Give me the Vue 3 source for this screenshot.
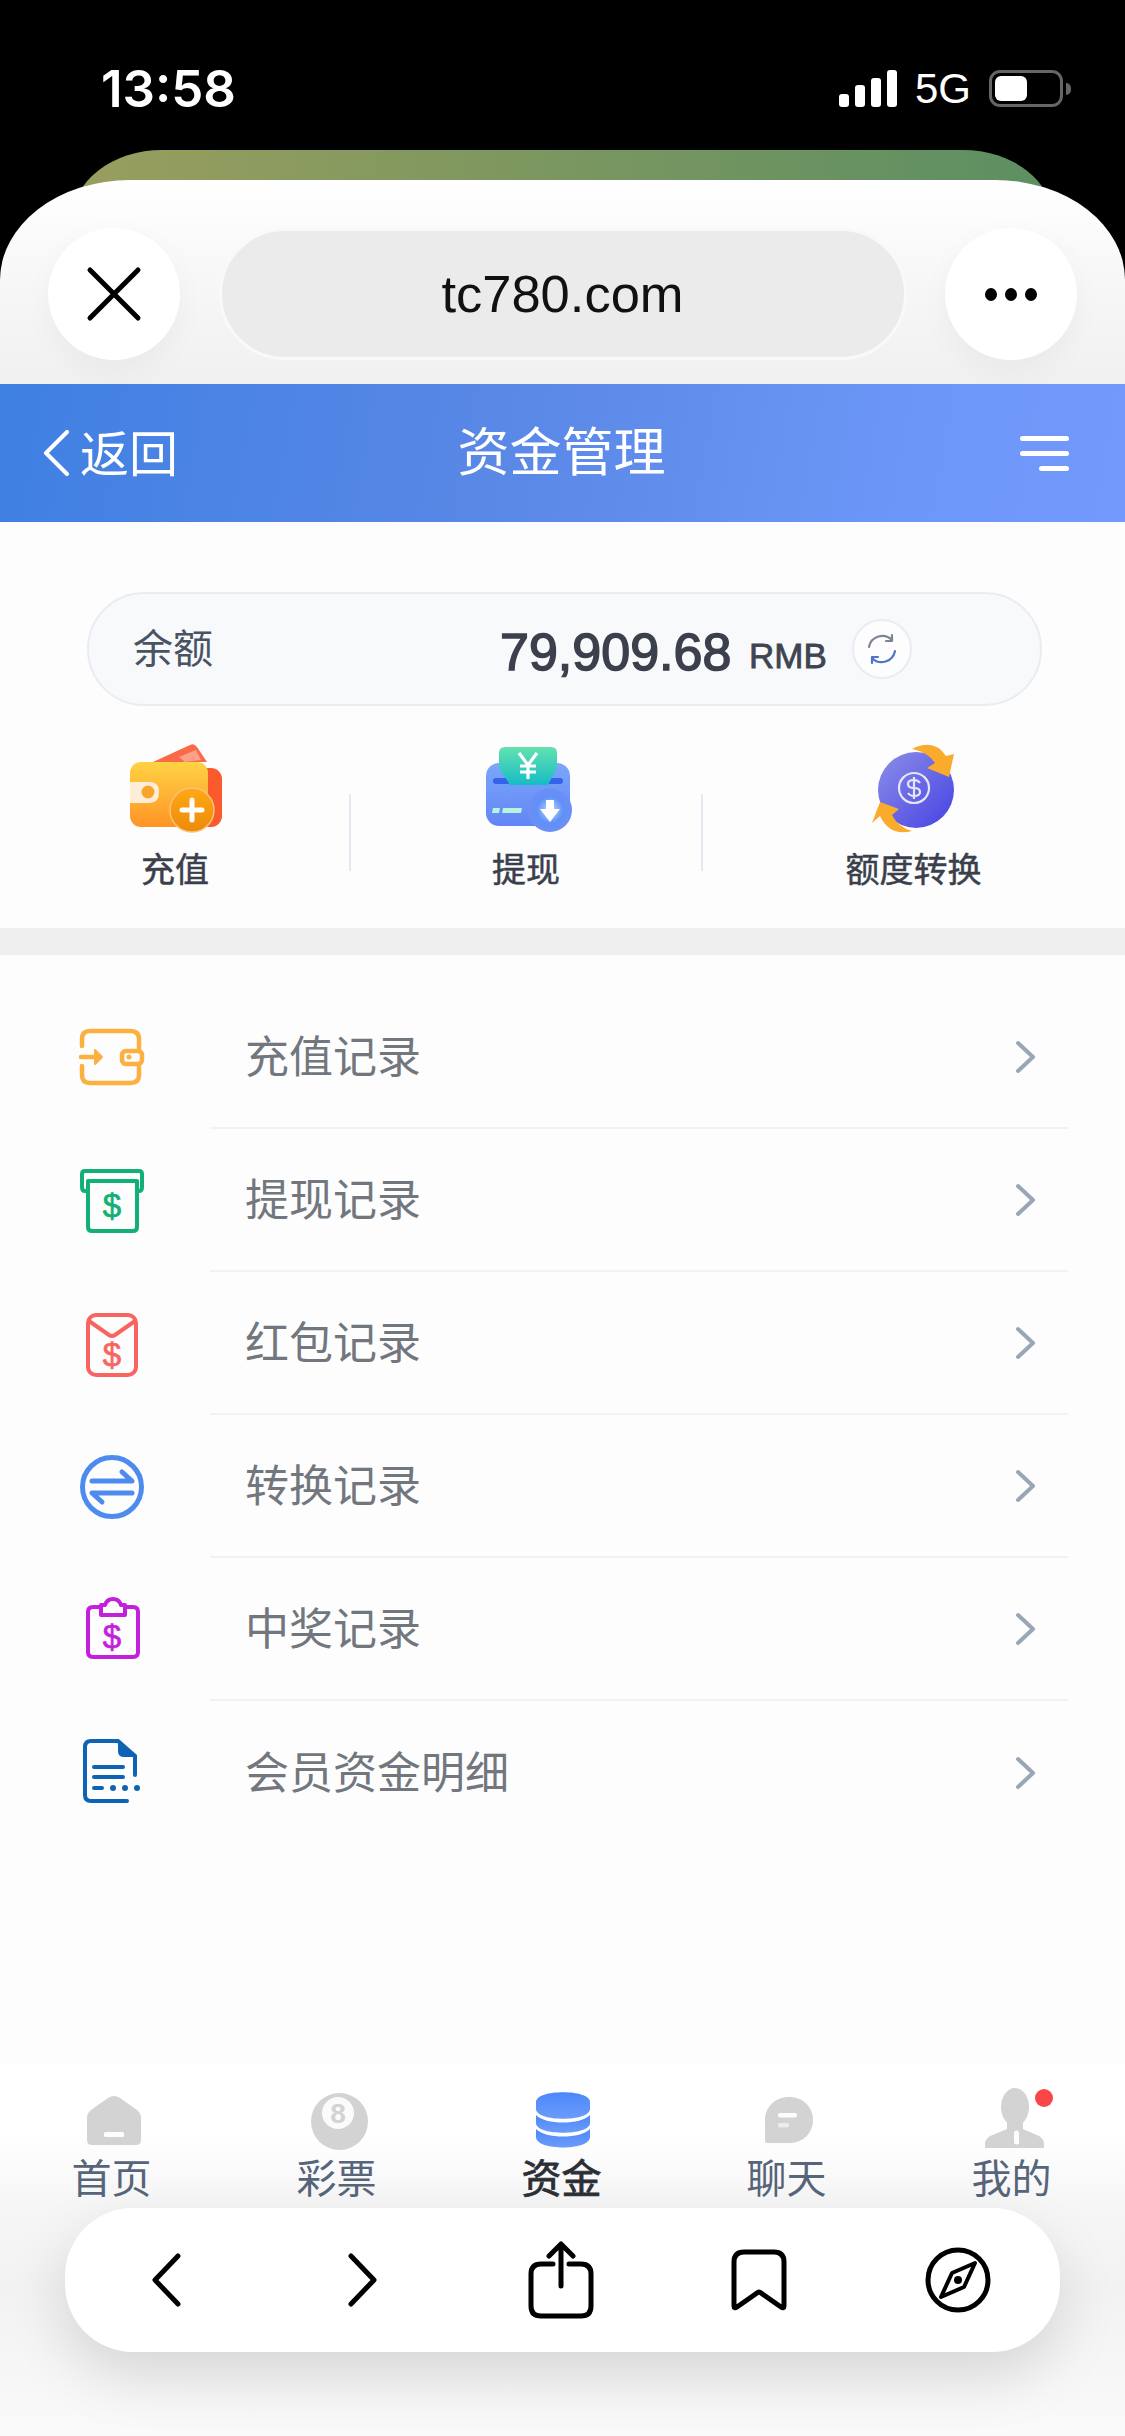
<template>
  <div class="screen">
    <div class="top">
      <!-- 状态栏 -->
      <div class="status">
        <span class="clock">13:58</span>
        <div class="status-right">
          <div class="signal">
            <i v-for="h in signalBars" :key="h" :style="{ height: h + 'px' }" />
          </div>
          <span class="net">5G</span>
          <div class="battery"><i /></div>
          <div class="nub" />
        </div>
      </div>

      <!-- 浏览器顶部 -->
      <div class="tab-peek" />
      <div class="sheet">
        <div class="round-btn">
          <svg width="56" height="56" viewBox="0 0 56 56"><path d="M4 4 L52 52 M52 4 L4 52" stroke="#000" stroke-width="5" stroke-linecap="round" /></svg>
        </div>
        <div class="url">tc780.com</div>
        <div class="round-btn dots"><i /><i /><i /></div>
      </div>
    </div>

    <!-- 标题栏 -->
    <div class="nav">
      <div class="back">
        <svg width="28" height="46" viewBox="0 0 28 46" fill="none"><path d="M25 2 L4 23 L25 44" stroke="#fff" stroke-width="4" stroke-linecap="round" stroke-linejoin="round" /></svg>
        <span>返回</span>
      </div>
      <div class="nav-title">资金管理</div>
      <div class="menu"><i /><i /><i class="short" /></div>
    </div>

    <!-- 余额 -->
    <div class="balance-wrap">
      <div class="balance">
        <span class="balance-label">余额</span>
        <span class="amount">79,909.68</span>
        <span class="unit">RMB</span>
        <div class="refresh">
          <svg width="34" height="34" viewBox="0 0 34 34" fill="none">
            <path d="M4 15 A13.500 13.500 0 0 1 27 8" stroke="#7a8596" stroke-width="2.200" stroke-linecap="round" />
            <path d="M30 19 A13.500 13.500 0 0 1 7 26" stroke="#4f74c8" stroke-width="2.200" stroke-linecap="round" />
            <path d="M27 3 V9 H21" stroke="#7a8596" stroke-width="2.200" stroke-linecap="round" stroke-linejoin="round" />
            <path d="M7 31 V25 H13" stroke="#4f74c8" stroke-width="2.200" stroke-linecap="round" stroke-linejoin="round" />
          </svg>
        </div>
      </div>
    </div>

    <!-- 快捷操作 -->
    <div class="actions">
      <div class="action a1">
        <svg width="100" height="92" viewBox="0 0 100 92">
          <defs>
            <linearGradient id="wal" x1="0" y1="0" x2="0" y2="1"><stop offset="0" stop-color="#ffd243" /><stop offset="1" stop-color="#ff9426" /></linearGradient>
            <linearGradient id="coin" x1="0" y1="0" x2="0" y2="1"><stop offset="0" stop-color="#ffa914" /><stop offset="1" stop-color="#ec8a0a" /></linearGradient>
          </defs>
          <path d="M28 20 L65 3 Q69 1 72 5 L82 20 Z" fill="#fb6a48" />
          <path d="M54 15 L71 8 L76 18 L60 20 Z" fill="#fda08a" />
          <rect x="62" y="26" width="35" height="59" rx="11" fill="#fb5a2c" />
          <rect x="5" y="20" width="78" height="65" rx="11" fill="url(#wal)" />
          <path d="M5 40 H25 Q34 40 34 50 Q34 61 25 61 H5 Z" fill="#fdeed8" />
          <circle cx="23" cy="50" r="6.500" fill="#f9a52c" />
          <circle cx="67" cy="68" r="22" fill="url(#coin)" stroke="#fbc27a" stroke-width="1.500" />
          <path d="M67 58 V78 M57 68 H77" stroke="#fff" stroke-width="5" stroke-linecap="round" />
        </svg>
        <span>充值</span>
      </div>
      <div class="action a2">
        <svg width="92" height="92" viewBox="0 0 92 92">
          <defs>
            <linearGradient id="bill" x1="0" y1="0" x2="0" y2="1"><stop offset="0" stop-color="#63e2ae" /><stop offset="1" stop-color="#15bcc5" /></linearGradient>
            <linearGradient id="card" x1="0" y1="0" x2="0" y2="1"><stop offset="0" stop-color="#7ba7fa" /><stop offset="1" stop-color="#6285f6" /></linearGradient>
            <radialGradient id="down"><stop offset="0" stop-color="#bcd8ff" /><stop offset=".6" stop-color="#5f90f8" /><stop offset="1" stop-color="#6d8ff4" /></radialGradient>
          </defs>
          <rect x="6" y="21" width="84" height="63" rx="13" fill="url(#card)" />
          <rect x="13" y="36" width="70" height="6" rx="3" fill="#3263ea" />
          <path d="M19 11 Q19 5 25 5 H71 Q77 5 77 11 V26 L68 43 H30 L19 26 Z" fill="url(#bill)" />
          <path d="M39 11 L48 23 L57 11 M48 23 V37 M40 24 H56 M40 30 H56" stroke="#fff" stroke-width="3.200" fill="none" />
          <path d="M13 66 H20 L19 71 H12 Z M23 66 H42 L41 71 H22 Z" fill="#b4f5de" />
          <circle cx="70" cy="68" r="22" fill="url(#down)" />
          <path d="M66 58 H74 V67 H80 L70 80 L60 67 H66 Z" fill="#fff" />
        </svg>
        <span>提现</span>
      </div>
      <div class="action a3">
        <svg width="84" height="92" viewBox="0 0 84 92">
          <defs>
            <linearGradient id="ball" x1="0" y1="0" x2="1" y2="1"><stop offset="0" stop-color="#8d8fe8" /><stop offset="1" stop-color="#4541e2" /></linearGradient>
          </defs>
          <circle cx="44" cy="48" r="38" fill="url(#ball)" />
          <circle cx="42" cy="46" r="15" fill="none" stroke="#e5e6fb" stroke-width="2.200" />
          <path d="M48 41 Q46 38 42 38 Q36 38 36 42 Q36 46 42 46 Q48 46 48 50 Q48 54 42 54 Q38 54 36 51 M42 35 V57" fill="none" stroke="#e5e6fb" stroke-width="2.200" />
          <path d="M40 7 Q62 -4 74 14 L82 12 L77 35 L55 26 L63 21 Q56 10 40 7 Z" fill="#fbab2b" />
          <path d="M40 89 Q18 95 8 74 L0 81 L8 60 L27 67 L20 73 Q26 85 40 89 Z" fill="#fbab2b" />
        </svg>
        <span>额度转换</span>
      </div>
    </div>

    <div class="band" />

    <!-- 记录列表 -->
    <ul class="list">
      <li v-for="row in rows" :key="row.text" class="row">
        <div class="row-icon">
          <svg width="72" height="72" viewBox="0 0 72 72" fill="none" v-html="row.icon" />
        </div>
        <div class="row-body">
          <span>{{ row.text }}</span>
          <svg width="22" height="34" viewBox="0 0 22 34" fill="none"><path d="M3 3 L18 17 L3 31" stroke="#9aa6b8" stroke-width="4" stroke-linecap="round" stroke-linejoin="round" /></svg>
        </div>
      </li>
    </ul>

    <!-- 底部标签 -->
    <div class="tabs">
      <div v-for="tab in tabs" :key="tab.text" class="tab" :class="{ active: tab.active }">
        <svg width="64" height="60" viewBox="0 0 64 60" v-html="tab.icon" />
        <b v-if="tab.dot" class="dot" />
        <span>{{ tab.text }}</span>
      </div>
    </div>

    <!-- 浏览器底部工具条 -->
    <div class="toolbar">
      <svg width="64" height="64" viewBox="0 0 64 64" fill="none" stroke="#000" stroke-width="5" stroke-linecap="round" stroke-linejoin="round"><path d="M43 8 L20 32 L43 56" /></svg>
      <svg width="64" height="64" viewBox="0 0 64 64" fill="none" stroke="#000" stroke-width="5" stroke-linecap="round" stroke-linejoin="round"><path d="M21 8 L44 32 L21 56" /></svg>
      <svg width="72" height="80" viewBox="0 0 72 80" fill="none" stroke="#000" stroke-width="5" stroke-linecap="round" stroke-linejoin="round"><path d="M28 24 H16 Q6 24 6 34 V66 Q6 76 16 76 H56 Q66 76 66 66 V34 Q66 24 56 24 H44" /><path d="M36 46 V4 M24 16 L36 4 L48 16" /></svg>
      <svg width="64" height="68" viewBox="0 0 64 68" fill="none" stroke="#000" stroke-width="5" stroke-linecap="round" stroke-linejoin="round"><path d="M7 60 V16 Q7 6 17 6 H47 Q57 6 57 16 V60 Q57 63 54 61 L34 47 Q32 45 30 47 L10 61 Q7 63 7 60 Z" /></svg>
      <svg width="72" height="72" viewBox="0 0 72 72" fill="none" stroke="#000" stroke-width="5" stroke-linejoin="round"><circle cx="36" cy="36" r="30" /><path d="M53 19 L42 43 L19 53 L30 29 Z" stroke-width="4" /><circle cx="36" cy="36" r="4" fill="#000" stroke="none" /></svg>
    </div>
  </div>
</template>

<script setup>
const signalBars = [13, 22, 29, 37]

const dollar = (y, color) =>
  `<text x="36" y="${y}" text-anchor="middle" font-family="Liberation Sans, sans-serif" font-size="33" stroke="${color}" stroke-width=".7" fill="${color}">$</text>`

const rows = [
  {
    text: '充值记录',
    icon: `<g stroke="#fbb040" stroke-width="4.500" stroke-linecap="round" stroke-linejoin="round">
      <path d="M6 24 V17 Q6 9 14 9 H54 Q63 9 63 17 V27 M63 44 V53 Q63 61 54 61 H14 Q6 61 6 53 V44" />
      <rect x="46" y="29" width="20" height="13" rx="4" />
      <path d="M5 35 H18" /><path d="M19 28 L26 35 L19 42 Z" fill="#fbb040" stroke-width="2" /></g>
      <circle cx="53" cy="35" r="2.500" fill="#fbb040" />`
  },
  {
    text: '提现记录',
    icon: `<path d="M12 26 H9 Q6 26 6 22 V9 Q6 6 9 6 H63 Q66 6 66 9 V22 Q66 26 63 26 H61" stroke="#12b076" stroke-width="4" />
      <path d="M12 16 H61 V62 Q61 66 57 66 H16 Q12 66 12 62 Z" stroke="#12b076" stroke-width="4" stroke-linejoin="round" />` + dollar(52, '#12b076')
  },
  {
    text: '红包记录',
    icon: `<rect x="12" y="7" width="48" height="60" rx="8" stroke="#f86560" stroke-width="4" />
      <path d="M13 13 L33 27 Q36 29 39 27 L59 13" stroke="#f86560" stroke-width="4" stroke-linecap="round" />` + dollar(58, '#f86560')
  },
  {
    text: '转换记录',
    icon: `<circle cx="36" cy="36" r="29.500" stroke="#4d8bee" stroke-width="5" />
      <path d="M16 30 H56 L46 21 M56 42 H16 L26 51" stroke="#4d8bee" stroke-width="5" stroke-linecap="round" stroke-linejoin="round" />`
  },
  {
    text: '中奖记录',
    icon: `<path d="M24 13 H17 Q12 13 12 18 V58 Q12 63 17 63 H57 Q62 63 62 58 V18 Q62 13 57 13 H50" stroke="#c41fdc" stroke-width="4" />
      <path d="M25 21 V11 H29 Q31 5 37 5 Q43 5 45 11 H49 V21 Z" stroke="#c41fdc" stroke-width="4" stroke-linejoin="round" />` + dollar(54, '#c41fdc')
  },
  {
    text: '会员资金明细',
    icon: `<path d="M59 38 V19 L42 4 H15 Q9 4 9 10 V58 Q9 64 15 64 H51" stroke="#0f63b4" stroke-width="4" stroke-linecap="round" />
      <path d="M42 3 L60 20 H48 Q42 20 42 14 Z" fill="#0f63b4" />
      <path d="M18 30 H47 M18 40 H47 M18 51 H26" stroke="#0f63b4" stroke-width="4" stroke-linecap="round" />
      <circle cx="37" cy="51" r="3" fill="#0f63b4" /><circle cx="49" cy="51" r="3" fill="#0f63b4" /><circle cx="61" cy="51" r="3" fill="#0f63b4" />`
  }
]

const grey = '#d3d3d3'
const tabs = [
  {
    text: '首页',
    icon: `<path d="M33 4 Q36 4 39 6 L56 18 Q60 21 60 26 V48 Q60 53 55 53 H11 Q6 53 6 48 V26 Q6 21 10 18 L27 6 Q30 4 33 4 Z" fill="${grey}" />
      <rect x="23" y="40" width="20" height="5" rx="1.500" fill="#fdfdfd" />`
  },
  {
    text: '彩票',
    icon: `<circle cx="33.500" cy="29.500" r="28.500" fill="${grey}" /><circle cx="32" cy="21" r="16" fill="#fbfbfb" />
      <text x="32" y="31" text-anchor="middle" font-family="Liberation Sans, sans-serif" font-size="28" font-weight="700" fill="${grey}">8</text>`
  },
  {
    text: '资金',
    active: true,
    icon: `<defs><linearGradient id="db" x1="0" y1="0" x2="0" y2="1"><stop offset="0" stop-color="#4b87fb" /><stop offset="1" stop-color="#6c9cf9" /></linearGradient></defs>
      <path d="M5 10 C5 -3 59 -3 59 10 V17 C59 30 5 30 5 17 Z" fill="url(#db)" />
      <path d="M5 23 C14 33 50 33 59 23 V31 C59 44 5 44 5 31 Z" fill="url(#db)" />
      <path d="M5 37 C14 47 50 47 59 37 V45 C59 59 5 59 5 45 Z" fill="url(#db)" />`
  },
  {
    text: '聊天',
    icon: `<path d="M33 5 C47 5 57 15 57 28 C57 41 47 51 33 51 H11 Q9 51 9 49 V28 C9 15 19 5 33 5 Z" fill="${grey}" />
      <rect x="22" y="21" width="19" height="4.500" rx="2" fill="#fdfdfd" /><rect x="22" y="31" width="11" height="4.500" rx="2" fill="#ececec" />`
  },
  {
    text: '我的',
    dot: true,
    icon: `<ellipse cx="34" cy="15" rx="14" ry="19" fill="${grey}" />
      <path d="M26 28 H42 V37 L58 44 Q63 47 63 52 V56 H4 V52 Q4 47 9 44 L26 37 Z" fill="${grey}" />
      <path d="M35.500 41 V50" stroke="#fdfdfd" stroke-width="5" stroke-linecap="round" />`
  }
]
</script>

<style>
html, body { margin: 0; background: #000; }
</style>

<style scoped>
.screen {
  width: 1125px; height: 2436px; position: relative; overflow: hidden;
  display: flex; flex-direction: column; background: #fdfdfe;
  font-family: "Liberation Sans", "Noto Sans CJK SC", sans-serif;
}
i { display: block; }

.top { flex: none; background: #000; }

/* 状态栏 */
.status { height: 150px; box-sizing: border-box; padding: 0 54px 0 101px; color: #fff; display: flex; align-items: flex-start; justify-content: space-between; }
.clock { font-family: Inter, sans-serif; font-weight: 600; font-size: 51px; line-height: 50px; margin-top: 64px; }
.status-right { display: flex; align-items: flex-end; margin-top: 70px; height: 37px; }
.signal { display: flex; align-items: flex-end; gap: 6.500px; margin-right: 18px; }
.signal i { width: 9.500px; background: #fff; border-radius: 3px; }
.net { font-size: 42px; line-height: 37px; margin-right: 18px; }
.battery { width: 74px; height: 37px; box-sizing: border-box; border: 3px solid #666; border-radius: 11px; padding: 3px; }
.battery i { width: 32px; height: 25px; background: #fff; border-radius: 6px; }
.nub { width: 5px; height: 12px; background: #666; border-radius: 0 5px 5px 0; margin: 0 0 12px 3px; }

/* 浏览器顶部 */
.tab-peek { height: 70px; margin: 0 72px -40px; background: linear-gradient(90deg, #999e5e, #5c8f62); border-radius: 90px 90px 0 0 / 70px 70px 0 0; }
.sheet {
  position: relative; height: 204px; box-sizing: border-box; padding: 48px 48px 0;
  display: flex; justify-content: space-between; align-items: flex-start;
  background: linear-gradient(#fff 0, #fafafa 30%, #f0f0f0 100%);
  border-radius: 130px 130px 0 0 / 100px 100px 0 0;
}
.round-btn { width: 132px; height: 132px; border-radius: 50%; background: #fff; display: flex; align-items: center; justify-content: center; box-shadow: 0 10px 30px rgba(0,0,0,.04); }
.dots { gap: 8px; }
.dots i { width: 12px; height: 13px; border-radius: 50%; background: #000; }
.url { width: 688px; height: 132px; box-sizing: border-box; border: 3px solid #f9f9f9; border-radius: 66px; background: #ebebeb; font-size: 52.500px; line-height: 126px; text-align: center; color: #111; }

/* 标题栏 */
.nav { flex: none; height: 138px; box-sizing: border-box; padding: 0 56px 0 42px; background: linear-gradient(100deg, #3f80e3 0%, #5a88e6 45%, #6c97f8 80%, #7299fb 100%); color: #fff; display: flex; align-items: center; justify-content: space-between; position: relative; }
.back { display: flex; align-items: center; gap: 10px; font-size: 49px; }
.back span { padding-bottom: 5px; }
.nav-title { position: absolute; left: 0; right: 2px; text-align: center; font-size: 52px; line-height: 60px; }
.menu { display: flex; flex-direction: column; align-items: flex-end; gap: 10px; }
.menu i { width: 49px; height: 5px; border-radius: 3px; background: #fff; }
.menu i.short { width: 30px; }

/* 余额 */
.balance-wrap { padding: 70px 83px 0 87px; flex: none; }
.balance { height: 114px; box-sizing: border-box; border: 2px solid #e9edf2; border-radius: 57px; background: #f7f9fb; display: flex; align-items: center; padding-left: 44px; color: #3d4350; }
.balance-label { font-size: 40px; color: #4a5364; width: 367px; padding-bottom: 6px; }
.amount { font-size: 52px; -webkit-text-stroke: 1.500px #3b404c; color: #3b404c; width: 249px; padding-top: 5px; }
.unit { font-size: 35px; -webkit-text-stroke: .8px #3f4450; color: #3f4450; width: 102px; padding-top: 13px; }
.refresh { width: 60px; height: 60px; box-sizing: border-box; border: 2px solid #e9edf2; border-radius: 50%; background: #fdfdfe; display: flex; align-items: center; justify-content: center; margin-left: 1px; }

/* 快捷操作 */
.actions { flex: none; display: flex; height: 222px; box-sizing: border-box; padding-top: 36px; }
.action { position: relative; display: flex; flex-direction: column; align-items: center; font-size: 34px; color: #3a3f4b; }
.action span { line-height: 44px; margin-top: 14px; -webkit-text-stroke: .5px #3a3f4b; }
.action svg { display: block; overflow: visible; }
.a1 { width: 350px; }
.a2 { width: 352px; }
.a3 { flex: 1; }
.a1::after, .a2::after { content: ""; position: absolute; right: -1px; top: 52px; width: 2px; height: 77px; background: #e3e9ee; }
.band { height: 27px; flex: none; background: #efefef; }

/* 记录列表 */
.list { list-style: none; margin: 0; padding: 31px 0 0; flex: none; }
.row { height: 143px; display: flex; align-items: stretch; }
.row-icon { width: 210px; box-sizing: border-box; padding-left: 76px; display: flex; align-items: center; }
.row-icon svg { display: block; }
.row-body { flex: 1; margin-right: 57px; padding: 0 31px 0 35px; border-bottom: 2px solid #f1f2f3; display: flex; align-items: center; justify-content: space-between; font-size: 44px; color: #72777e; }
.row-body span { padding-bottom: 6px; }
.row:last-child .row-body { border-bottom: 0; }

/* 底部标签 */
.tabs { position: absolute; left: 0; right: 0; bottom: 0; height: 371px; box-sizing: border-box; padding-top: 27px; display: flex; background: linear-gradient(#fff 0, #fff 18%, #f6f6f6 38%, #f2f2f2 60%, #f7f7f7 85%, #fafafa 100%); }
.tab { position: relative; width: 225px; display: flex; flex-direction: column; align-items: center; font-size: 40px; color: #57657a; }
.tab svg { display: block; overflow: visible; }
.tab span { line-height: 50px; margin-top: 2px; padding-right: 2px; }
.tab.active { color: #2c2f36; }
.tab.active span { -webkit-text-stroke: .8px #2c2f36; }
.dot { position: absolute; left: 135px; top: -3px; width: 18px; height: 18px; border-radius: 50%; background: #f94646; }

/* 浏览器底部工具条 */
.toolbar { position: absolute; left: 65px; top: 2208px; width: 995px; height: 144px; box-sizing: border-box; padding: 0 66px 0 70px; border-radius: 68px; background: #fff; box-shadow: 0 24px 60px rgba(0,0,0,.13); display: flex; align-items: center; justify-content: space-between; }
</style>
